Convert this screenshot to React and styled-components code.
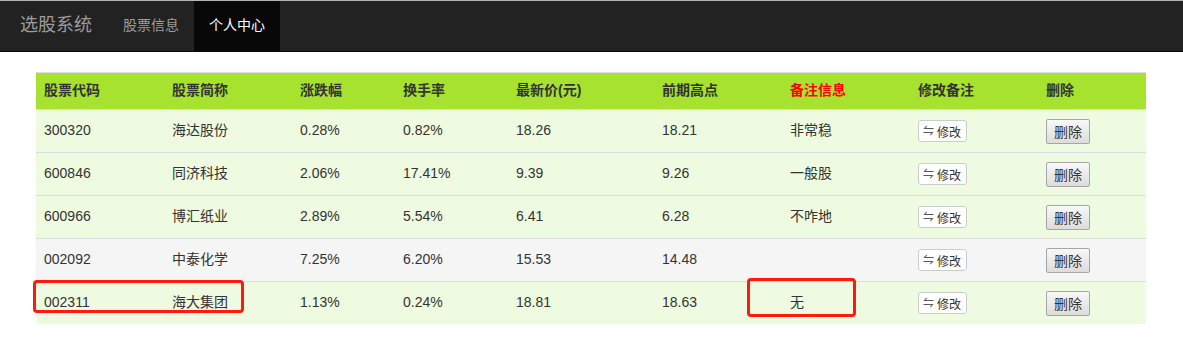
import React from "react";
import styled, { createGlobalStyle } from "styled-components";

const Global = createGlobalStyle`
  html, body { margin: 0; padding: 0; background: #fff; }
  body {
    font-family: "Liberation Sans", Arial, "Noto Sans CJK SC", sans-serif;
    font-size: 14px;
    line-height: 1.42857;
    color: #333;
  }
`;

const Navbar = styled.nav`
  display: flex;
  align-items: stretch;
  height: 50px;
  background: #222;
  border-top: 1px solid #b4b4b4;
  border-bottom: 1px solid #080808;
`;

const Brand = styled.a`
  display: flex;
  align-items: center;
  padding: 0 16px 0 20px;
  font-size: 18px;
  color: #9d9d9d;
  text-decoration: none;
`;

const NavLink = styled.a`
  display: flex;
  align-items: center;
  padding: 0 15px;
  font-size: 14px;
  color: ${(p) => (p.$active ? "#fff" : "#9d9d9d")};
  background: ${(p) => (p.$active ? "#080808" : "transparent")};
  text-decoration: none;
`;

const Main = styled.main`
  padding: 20px 37px 20px 36px;
`;

const TableWrap = styled.div`
  position: relative;
`;

const Table = styled.table`
  width: 100%;
  border-collapse: collapse;
  border-spacing: 0;
  table-layout: fixed;
`;

const HeadCell = styled.th`
  text-align: left;
  font-weight: bold;
  padding: 8px;
  height: 20px;
  background: #a6e22e;
  color: ${(p) => (p.$red ? "#ff0000" : "#333")};
  border-top: 1px solid #ddd;
  vertical-align: middle;
`;

const Row = styled.tr`
  background: ${(p) => (p.$hover ? "#f5f5f5" : "#effbe0")};
`;

const Cell = styled.td`
  padding: 8px;
  height: 26px;
  border-top: 1px solid #ddd;
  vertical-align: middle;
  white-space: nowrap;
`;

const EditButton = styled.button`
  display: inline-flex;
  align-items: center;
  gap: 3px;
  height: 22px;
  padding: 0 5px 0 4px;
  font-family: inherit;
  font-size: 12px;
  color: #333;
  background: #fff;
  border: 1px solid #ccc;
  border-radius: 3px;
`;

const Icon = styled.span`
  font-size: 11px;
  line-height: 1;
`;

const DeleteButton = styled.button`
  height: 25px;
  padding: 0 7px;
  font-family: inherit;
  font-size: 14px;
  color: #333;
  background: linear-gradient(#f8f8f8, #dcdcdc);
  border: 1px solid #a6a6a6;
  border-radius: 2px;
`;

const Highlight = styled.div`
  position: absolute;
  border: 3px solid #ff1a0d;
  border-radius: 4px;
  box-sizing: border-box;
  pointer-events: none;
`;

const widths = [128, 128, 103, 113, 146, 128, 128, 128, 108];
const headers = ["股票代码", "股票简称", "涨跌幅", "换手率", "最新价(元)", "前期高点", "备注信息", "修改备注", "删除"];

const rows = [
  ["300320", "海达股份", "0.28%", "0.82%", "18.26", "18.21", "非常稳"],
  ["600846", "同济科技", "2.06%", "17.41%", "9.39", "9.26", "一般股"],
  ["600966", "博汇纸业", "2.89%", "5.54%", "6.41", "6.28", "不咋地"],
  ["002092", "中泰化学", "7.25%", "6.20%", "15.53", "14.48", ""],
  ["002311", "海大集团", "1.13%", "0.24%", "18.81", "18.63", "无"],
];

export default function App() {
  return (
    <>
      <Global />
      <Navbar>
        <Brand>选股系统</Brand>
        <NavLink>股票信息</NavLink>
        <NavLink $active>个人中心</NavLink>
      </Navbar>
      <Main>
        <TableWrap>
          <Table>
            <colgroup>
              {widths.map((w, i) => (
                <col key={i} style={{ width: w }} />
              ))}
            </colgroup>
            <thead>
              <tr>
                {headers.map((h, i) => (
                  <HeadCell key={h} $red={i === 6}>
                    {h}
                  </HeadCell>
                ))}
              </tr>
            </thead>
            <tbody>
              {rows.map((r, i) => (
                <Row key={r[0]} $hover={i === 3}>
                  {r.map((c, j) => (
                    <Cell key={j}>{c}</Cell>
                  ))}
                  <Cell>
                    <EditButton>
                      <Icon>⇋</Icon>修改
                    </EditButton>
                  </Cell>
                  <Cell>
                    <DeleteButton>删除</DeleteButton>
                  </Cell>
                </Row>
              ))}
            </tbody>
          </Table>
          <Highlight style={{ left: -3, top: 208, width: 211, height: 33 }} />
          <Highlight style={{ left: 711, top: 206, width: 109, height: 39 }} />
        </TableWrap>
      </Main>
    </>
  );
}
